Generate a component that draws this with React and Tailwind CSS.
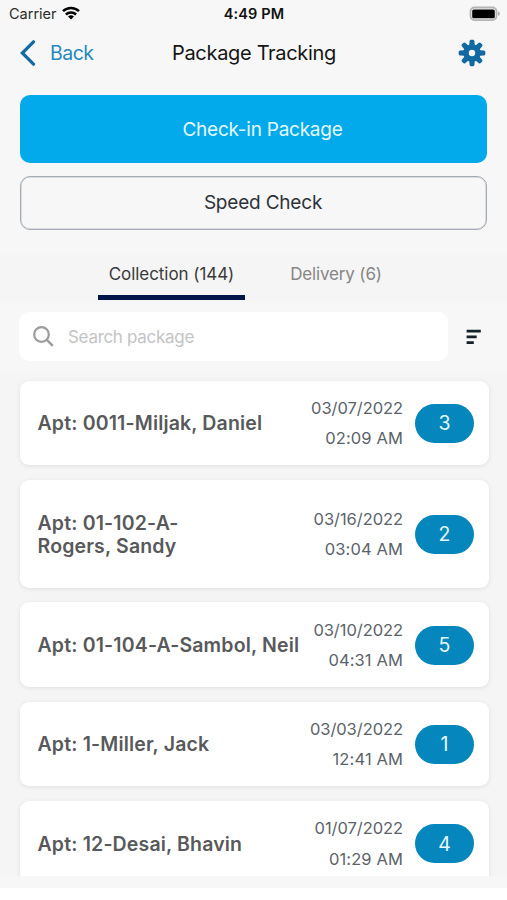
const packages = [
  { name: ["Apt: 0011-Miljak, Daniel"], date: "03/07/2022", time: "02:09 AM", count: 3 },
  { name: ["Apt: 01-102-A-", "Rogers, Sandy"], date: "03/16/2022", time: "03:04 AM", count: 2 },
  { name: ["Apt: 01-104-A-Sambol, Neil"], date: "03/10/2022", time: "04:31 AM", count: 5 },
  { name: ["Apt: 1-Miller, Jack"], date: "03/03/2022", time: "12:41 AM", count: 1 },
  { name: ["Apt: 12-Desai, Bhavin"], date: "01/07/2022", time: "01:29 AM", count: 4 },
];

function WifiIcon() {
  return (
    <svg width="18" height="14" viewBox="0 0 18 14" className="-mt-[2px] ml-[5px]" fill="none" stroke="#050505" strokeWidth="2.5">
      <path d="M1 5.200a11.400 11.400 0 0 1 16 0" />
      <path d="M3.900 8.500a7.200 7.200 0 0 1 10.200 0" />
      <path d="M9 13.600 6 10.600a4.300 4.300 0 0 1 6 0z" fill="#050505" stroke="none" />
    </svg>
  );
}

function BatteryIcon() {
  return (
    <svg width="32" height="16" viewBox="0 0 32 16" className="-mt-px">
      <rect x="1.500" y="1.500" width="26" height="12.600" rx="4" fill="#f7f7f7" stroke="#b4b4b4" strokeWidth="1.800" />
      <rect x="3.200" y="3.400" width="22.600" height="8.800" rx="1.500" fill="#000" />
      <path d="M29 5.600c1.300.4 1.900 1.200 1.900 2.100s-.6 1.700-1.900 2.100z" fill="#b4b4b4" />
    </svg>
  );
}

function GearIcon() {
  const teeth = [0, 45, 90, 135, 180, 225, 270, 315];
  return (
    <svg width="28" height="28" viewBox="-14 -14 28 28">
      {teeth.map((a) => (
        <path key={a} transform={`rotate(${a})`} d="M-2.800-7.500-2.400-12Q-2.100-13.300-.9-13.300H.9Q2.100-13.300 2.400-12L2.800-7.500z" fill="#126aa2" />
      ))}
      <circle r="6" fill="none" stroke="#126aa2" strokeWidth="5.600" />
    </svg>
  );
}

function PackageCard({ item }) {
  const tall = item.name.length > 1;
  return (
    <div className={`flex shrink-0 items-center rounded-[9px] bg-white pl-[18px] pr-[15px] shadow-[0_1px_5px_rgba(0,0,0,0.09)] ${tall ? "h-[108px]" : "h-[84.8px]"}`}>
      <div className="flex-1 whitespace-nowrap pt-[2px] text-[19.500px] font-semibold leading-[23px] tracking-[0.160px] text-[#58595b]">
        {item.name.map((line) => (
          <div key={line}>{line}</div>
        ))}
      </div>
      <div className="mr-[12px] whitespace-nowrap pt-px text-right text-[16.500px] leading-[30.500px] text-[#5b636a]">
        <div className="tracking-[-0.060px]">{item.date}</div>
        <div className="tracking-[0.120px]">{item.time}</div>
      </div>
      <div className="mt-px flex h-[39px] w-[59px] items-center justify-center rounded-[20px] bg-[#0587bd] pt-px text-[19.500px] text-[#e6f8ff]">
        {item.count}
      </div>
    </div>
  );
}

export default function App() {
  return (
    <div className="h-[900px] w-[507px] overflow-hidden bg-white font-['Inter','Liberation_Sans',sans-serif]">
      <div className="flex h-[888px] flex-col bg-[#f7f7f7]">
        <div className="grid h-[28px] shrink-0 grid-cols-3 items-center pl-[9px] pr-[6px]">
          <div className="flex items-center text-[14.500px] text-[#2b2b2b]">
            Carrier
            <WifiIcon />
          </div>
          <div className="whitespace-nowrap text-center text-[14.500px] font-semibold tracking-[0.150px] text-[#111]"><span className="-ml-[2px]">4:49 PM</span></div>
          <div className="flex justify-end"><BatteryIcon /></div>
        </div>

        <div className="grid h-[50px] shrink-0 grid-cols-[152px_1fr_152px] items-center px-[20px]">
          <div className="flex items-center text-[19.500px] tracking-[-0.500px] text-[#2689bd]">
            <svg width="16" height="26" viewBox="0 0 16 26" className="mr-[14px]" fill="none" stroke="#126aa2" strokeWidth="3.200">
              <path d="M13.500 1.800 2.300 13l11.200 11.200" strokeLinecap="round" />
            </svg>
            <span className="pt-px">Back</span>
          </div>
          <div className="whitespace-nowrap text-center text-[20px] tracking-[-0.320px] text-[#151515]">Package Tracking</div>
          <div className="flex justify-end pr-[2px]"><GearIcon /></div>
        </div>

        <div className="mx-[20px] mt-[17px] flex h-[68px] shrink-0 items-center justify-center rounded-[10px] bg-[#02aaeb] pl-[18px] pt-[2px] text-[19px] tracking-[-0.250px] text-[#e4f8ff]">
          Check-in Package
        </div>
        <div className="mx-[20px] mt-[12.500px] flex h-[54px] shrink-0 items-center justify-center rounded-[10px] border border-[#a3abb5] pl-[19px] pt-[2px] text-[19px] tracking-[-0.200px] text-[#2e3338] shadow-[inset_0_0_0_0.5px_#bcc2c9]">
          Speed Check
        </div>

        <div className="mt-[25px] flex h-[48px] shrink-0 bg-[#f5f5f5] pl-[98px] text-[17px]">
          <div className="flex h-[45px] w-[147px] justify-center border-b-[5px] border-[#021548] pt-[7px] tracking-[-0.060px] text-[#3a3a3a]">Collection (144)</div>
          <div className="flex w-[182px] justify-center pt-[7px] tracking-[-0.150px] text-[#858585]">Delivery (6)</div>
        </div>

        <div className="mt-[9px] flex h-[49px] shrink-0 items-center pl-[19px]">
          <div className="flex h-full w-[429px] items-center rounded-[10px] bg-white pl-[14px] text-[17px] tracking-[-0.300px] text-[#c4c4c6]">
            <svg width="21" height="21" viewBox="0 0 21 21" className="mr-[14px]" fill="none" stroke="#9c9c9c" strokeWidth="2.200">
              <circle cx="8.500" cy="8.500" r="7.300" />
              <path d="m13.800 13.800 6 6" strokeWidth="2.500" />
            </svg>
            <span className="pt-[3px]">Search package</span>
          </div>
          <svg width="15" height="16" viewBox="0 0 15 16" className="ml-[18px] mt-px" fill="none" stroke="#132228" strokeWidth="2.900">
            <path d="M.6 2.100h14.200M.6 7.900h10.100M.6 13.600h7.200" />
          </svg>
        </div>

        <div className="mt-[11px] flex h-[504px] flex-col gap-[14.500px] overflow-hidden bg-[#f5f5f5] pl-[19.500px] pr-[18px] pt-[9px]">
          {packages.map((item) => (
            <PackageCard key={item.date} item={item} />
          ))}
        </div>
      </div>
    </div>
  );
}
